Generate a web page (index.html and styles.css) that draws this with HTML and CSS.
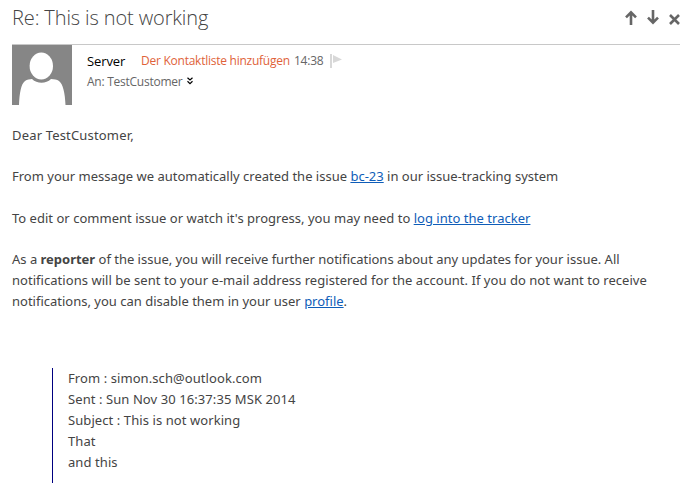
FILE: index.html
```html
<!DOCTYPE html>
<html lang="de">
<head>
<meta charset="utf-8">
<title>Re: This is not working</title>
<link rel="stylesheet" href="styles.css">
</head>
<body>
<header class="subject-bar">
  <h1 class="subject">Re: This is not working</h1>
  <nav class="actions">
    <svg width="12" height="15" viewBox="0 0 12 15"><path d="M6 15V2M1 7.3L6 2.3L11 7.3"/></svg>
    <svg width="12" height="15" viewBox="0 0 12 15"><path d="M6 0V13M1 7.7L6 12.7L11 7.7"/></svg>
    <svg class="close" width="11" height="11" viewBox="0 0 11 11"><path d="M1 1L10 10M10 1L1 10"/></svg>
  </nav>
</header>
<section class="sender">
  <svg class="avatar" width="60" height="60" viewBox="0 0 60 60">
    <rect width="60" height="60" fill="#868686"/>
    <ellipse cx="29.3" cy="21" rx="11.7" ry="13.5" fill="#fff"/>
    <path d="M7 60C7.500 48 9 39 13 36C15 34.600 18 34.200 20 34C25 39 34 39 39 34C42 34.200 45 34.600 47 36C51 39 53 48 53.500 60Z" fill="#fff"/>
  </svg>
  <div class="details">
    <div class="from-row">
      <span class="name">Server</span>
      <span class="add">Der Kontaktliste hinzufügen</span>
      <span class="time">14:38</span>
      <svg class="flag" width="12" height="14" viewBox="0 0 12 14"><path d="M0 0H2V14H0ZM3 1L12 5.500L3 9Z"/></svg>
    </div>
    <div class="to-row">
      <span class="to">An: TestCustomer</span>
      <svg class="more" width="6" height="8" viewBox="0 0 6 8"><path d="M.5 .8L3 3L5.500 .8M.5 4.300L3 6.600L5.500 4.300"/></svg>
    </div>
  </div>
</section>
<main class="message">
  <p class="dear">Dear TestCustomer,</p>
  <p class="created">From your message we automatically created the issue <a>bc-23</a> in our issue-tracking system</p>
  <p class="edit">To edit or comment issue or watch it's progress, you may need to <a>log into the tracker</a></p>
  <p class="about"><span class="line l1">As a <b>reporter</b> of the issue, you will receive further notifications about any updates for your issue. All</span>
  <span class="line l2">notifications will be sent to your e-mail address registered for the account. If you do not want to receive</span>
  <span class="line l3">notifications, you can disable them in your user <a>profile</a>.</span></p>
  <blockquote class="quote">
    <div>From : simon.sch@outlook.com</div>
    <div>Sent : Sun Nov 30 16:37:35 MSK 2014</div>
    <div>Subject : This is not working</div>
    <div>That</div>
    <div>and this</div>
  </blockquote>
</main>
</body>
</html>
```
FILE: styles.css
```css
body {
  margin: 0;
  height: 483px;
  overflow: hidden;
  background: #fff;
  color: #444;
  font-family: "Open Sans", "Noto Sans", sans-serif;
}
.subject-bar {
  display: flex;
  justify-content: space-between;
  box-sizing: border-box;
  width: 668px;
  height: 45px;
  margin-left: 12px;
  border-bottom: 1px solid #c8c8c8;
}
.subject {
  margin: 4px 0 0;
  font-size: 20px;
  line-height: 28px;
  font-weight: 300;
  letter-spacing: -0.12px;
  white-space: nowrap;
}
.actions {
  display: flex;
  gap: 10px;
  margin-top: 10px;
}
.actions path {
  fill: none;
  stroke: #666;
  stroke-width: 2.6;
}
.close {
  margin-top: 4px;
}
.sender {
  display: flex;
  gap: 15px;
  height: 60px;
  margin-left: 12px;
}
.details {
  padding-top: 6px;
  font-size: 12px;
  letter-spacing: -0.25px;
  white-space: nowrap;
}
.from-row, .to-row {
  display: flex;
  align-items: center;
  height: 20px;
}
.from-row {
  position: relative;
  top: -0.5px;
}
.name {
  width: 54px;
  color: #000;
  font-size: 13px;
  letter-spacing: -0.1px;
}
.add {
  width: 153px;
  color: #e0623a;
}
.time {
  width: 36px;
  color: #666;
}
.flag {
  fill: #d8d8d8;
}
.to-row {
  gap: 5px;
  color: #666;
}
.more {
  fill: none;
  stroke: #000;
  stroke-width: 1.2;
}
.message {
  margin: 20px 12px 0;
  font-family: "Noto Sans", sans-serif;
  font-size: 13px;
  line-height: 21px;
}
.message p {
  margin: 0 0 21px;
  white-space: nowrap;
}
.message .dear {
  margin-bottom: 20px;
  letter-spacing: 0.17px;
}
.message .edit {
  margin-bottom: 20px;
  letter-spacing: 0.02px;
}
.line {
  display: block;
}
.l1 {
  letter-spacing: -0.01px;
}
.l2 {
  letter-spacing: 0.04px;
}
.message a {
  color: #0f5db8;
  text-decoration: underline;
}
.quote {
  box-sizing: border-box;
  height: 115px;
  margin: 56px 0 0 40px;
  padding-left: 15px;
  border-left: 1px solid #000080;
  letter-spacing: 0.08px;
}
```
